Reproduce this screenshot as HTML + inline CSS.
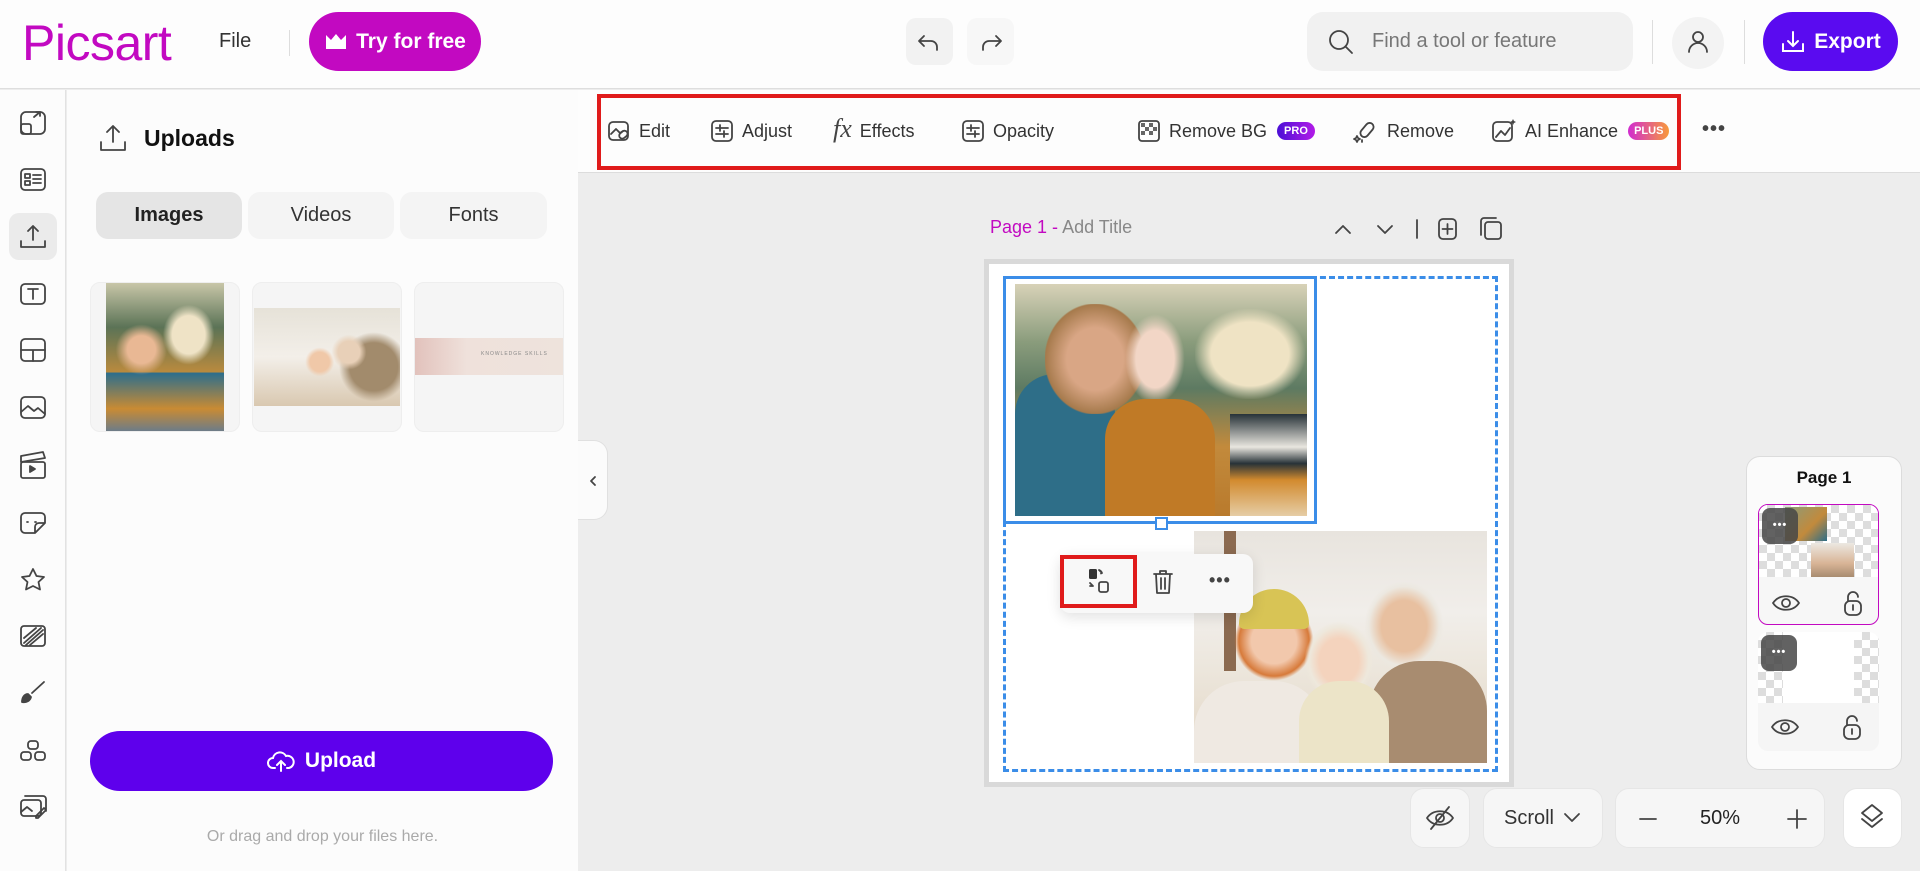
<!DOCTYPE html>
<html><head><meta charset="utf-8"><style>
*{box-sizing:border-box;margin:0;padding:0}
body{width:1920px;height:871px;overflow:hidden;background:#ededed;font-family:"Liberation Sans",sans-serif;position:relative;color:#222}
.a{position:absolute}
svg{display:block}
.ic{fill:none;stroke:#444;stroke-width:1.8;stroke-linecap:round;stroke-linejoin:round}
.tb{position:absolute;top:117px;font-size:18px;color:#333;display:flex;align-items:center;gap:8px;height:28px}
.chk{background-color:#fff;background-image:linear-gradient(45deg,#ddd 25%,transparent 25%,transparent 75%,#ddd 75%),linear-gradient(45deg,#ddd 25%,transparent 25%,transparent 75%,#ddd 75%);background-size:16px 16px;background-position:0 0,8px 8px}
.ctl{position:absolute;top:788px;height:60px;background:#f6f6f6;border-radius:14px;border:1px solid #e6e6e6}
</style></head><body>
<!-- header -->
<div class="a" style="left:0;top:0;width:1920px;height:89px;background:#fdfdfd;border-bottom:1px solid #dedede"></div>
<div class="a" style="left:22px;top:14px;font-size:50px;color:#c209c1;letter-spacing:-0.5px">Picsart</div>
<div class="a" style="left:219px;top:30px;font-size:20px;color:#333">File</div>
<div class="a" style="left:289px;top:30px;width:1px;height:26px;background:#ddd"></div>
<div class="a" style="left:309px;top:12px;width:172px;height:59px;background:#c209c1;border-radius:30px;color:#fff;font-size:21px;font-weight:bold;display:flex;align-items:center;justify-content:center;gap:8px">
<svg width="24" height="20" viewBox="0 0 24 20"><path d="M2 3l5 5 5-6 5 6 5-5v14H2z" fill="#fff"/></svg>Try for free</div>
<div class="a" style="left:906px;top:18px;width:47px;height:47px;background:#f2f2f2;border-radius:10px"><svg width="47" height="47"><path class="ic" d="M18 18l-5 5 5 5M13 23h12a6 6 0 0 1 6 6v3" stroke="#333"/></svg></div>
<div class="a" style="left:967px;top:18px;width:47px;height:47px;background:#f7f7f7;border-radius:10px"><svg width="47" height="47"><path class="ic" d="M29 18l5 5-5 5M34 23H22a6 6 0 0 0-6 6v3" stroke="#bbb"/></svg></div>
<div class="a" style="left:1307px;top:12px;width:326px;height:59px;background:#f1f1f1;border-radius:16px"><svg class="a" style="left:20px;top:16px" width="28" height="28"><circle cx="12" cy="12" r="9" class="ic" stroke="#333" stroke-width="2"/><path d="M19 19l6 6" class="ic" stroke="#333" stroke-width="2"/></svg><div class="a" style="left:65px;top:18px;font-size:20px;color:#777">Find a tool or feature</div></div>
<div class="a" style="left:1652px;top:20px;width:1px;height:44px;background:#ddd"></div>
<div class="a" style="left:1672px;top:17px;width:52px;height:52px;background:#f3f3f3;border-radius:50%"><svg width="52" height="52"><circle cx="26" cy="20" r="5" class="ic" stroke="#333"/><path d="M17 35a9 9 0 0 1 18 0" class="ic" stroke="#333"/></svg></div>
<div class="a" style="left:1744px;top:20px;width:1px;height:44px;background:#ddd"></div>
<div class="a" style="left:1763px;top:12px;width:135px;height:59px;background:#5a0bf0;border-radius:30px;color:#fff;font-size:21px;font-weight:bold;display:flex;align-items:center;justify-content:center;gap:8px"><svg width="26" height="26"><path d="M13 3v14M8 12l5 5 5-5M3 15v7h20v-7" fill="none" stroke="#fff" stroke-width="2" stroke-linecap="round"/></svg>Export</div>

<!-- left rail -->
<div class="a" style="left:0;top:90px;width:66px;height:781px;background:#fcfcfc;border-right:1px solid #e2e2e2"></div>
<div class="a" style="left:9px;top:213px;width:48px;height:47px;background:#ebebeb;border-radius:10px"></div>
<svg class="a" style="left:0;top:90px" width="66" height="781">
<g class="ic" stroke="#444">
<rect x="21" y="22" width="24" height="22" rx="5"/><rect x="21" y="34" width="10" height="10" rx="2"/><path d="M34 27l6-5M36 22h4v4"/>
<rect x="21" y="79" width="24" height="21" rx="4"/><rect x="25" y="84" width="5" height="4"/><rect x="25" y="91" width="5" height="4"/><path d="M33 85h8M33 89h8M33 93h8"/>
<g transform="translate(0,18)"><path d="M33 132v-14M28 123l5-5 5 5M21 133v6h24v-6"/></g>
<rect x="21" y="194" width="24" height="20" rx="4"/><path d="M28 199h10M33 199v10"/>
<rect x="21" y="249" width="24" height="22" rx="4"/><path d="M21 260h24M33 260v11"/>
<rect x="21" y="307" width="24" height="21" rx="4"/><path d="M21 322l7-6 6 5 4-3 7 6"/>
<g transform="translate(0,4)"><rect x="21" y="368" width="24" height="16" rx="2"/><path d="M21 362l22-4 2 6-24 4z"/><path d="M30 372l5 3-5 3z" fill="#444"/></g>
<g transform="translate(0,12)"><path d="M21 428v-13a4 4 0 0 1 4-4h16a4 4 0 0 1 4 4v6l-10 10h-10a4 4 0 0 1-4-4zM35 431v-6a4 4 0 0 1 4-4h6M27 420h1M35 420h1"/></g>
<g transform="translate(0,11)"><path d="M33 468l3.5 7 7.5 1-5.5 5 1.5 7.5-7-3.5-7 3.5 1.5-7.5-5.5-5 7.5-1z"/></g>
<rect x="21" y="536" width="24" height="20" rx="3"/><path d="M24 553l17-15M26 555l17-15M24 548l12-10M30 555l13-11"/>
<g transform="translate(0,8)"><path d="M44 584l-12 11M22 604c4 1 8-1 9-5l-3-3c-4 0-6 4-6 8z" fill="#444"/></g>
<g transform="translate(0,11)"><rect x="28" y="640" width="10" height="8" rx="3"/><rect x="21" y="651" width="10" height="8" rx="3"/><rect x="35" y="651" width="10" height="8" rx="3"/></g>
<g transform="translate(0,8)"><rect x="21" y="702" width="20" height="16" rx="3"/><path d="M25 698h18a3 3 0 0 1 3 3v12M21 714l6-5 5 4M36 718l8-8 2 2-8 8h-2z"/></g>
</g></svg>

<!-- panel -->
<div class="a" style="left:67px;top:90px;width:511px;height:781px;background:#fcfcfc"></div>
<svg class="a" style="left:98px;top:122px" width="30" height="32"><path class="ic" stroke="#333" d="M15 20V4M9 10l6-6 6 6M3 20v8h24v-8"/></svg>
<div class="a" style="left:144px;top:125px;font-size:23px;font-weight:bold;color:#111">Uploads</div>
<div class="a" style="left:96px;top:192px;width:146px;height:47px;background:#e5e5e5;border-radius:12px;font-size:20px;font-weight:bold;color:#222;display:flex;align-items:center;justify-content:center">Images</div>
<div class="a" style="left:248px;top:192px;width:146px;height:47px;background:#f4f4f4;border-radius:12px;font-size:20px;color:#333;display:flex;align-items:center;justify-content:center">Videos</div>
<div class="a" style="left:400px;top:192px;width:147px;height:47px;background:#f4f4f4;border-radius:12px;font-size:20px;color:#333;display:flex;align-items:center;justify-content:center">Fonts</div>
<div class="a" style="left:90px;top:282px;width:150px;height:150px;background:#f5f5f5;border-radius:10px;border:1px solid #eee"></div>
<div class="a" style="left:106px;top:283px;width:118px;height:148px;background:radial-gradient(ellipse at 30% 45%,#e9b894 0 12%,transparent 22%),radial-gradient(ellipse at 70% 35%,#efe3c6 0 14%,transparent 22%),linear-gradient(180deg,#c8c6a8 0,#5b7356 30%,#b98a3e 60%,#2d6e8c 61%,#c98b33 85%,#6d7c88 100%)"></div>
<div class="a" style="left:252px;top:282px;width:150px;height:150px;background:#f5f5f5;border-radius:10px;border:1px solid #eee"></div>
<div class="a" style="left:254px;top:308px;width:146px;height:98px;background:radial-gradient(circle at 45% 55%,#f0c8a8 0 10%,transparent 15%),radial-gradient(circle at 65% 45%,#e8d0b8 0 10%,transparent 16%),radial-gradient(circle at 82% 60%,#a28b6c 0 18%,transparent 26%),linear-gradient(180deg,#e6e2d8,#f3efe9 50%,#d9c8b0)"></div>
<div class="a" style="left:414px;top:282px;width:150px;height:150px;background:#f5f5f5;border-radius:10px;border:1px solid #eee"></div>
<div class="a" style="left:415px;top:338px;width:148px;height:37px;background:linear-gradient(90deg,#e2c2bc,#efe1db 35%,#eee3dc)"><div style="position:absolute;left:66px;top:13px;font-size:5px;letter-spacing:1px;color:#888">KNOWLEDGE SKILLS</div></div>
<div class="a" style="left:90px;top:731px;width:463px;height:60px;background:#5e00ec;border-radius:30px;color:#fff;font-size:21px;font-weight:bold;display:flex;align-items:center;justify-content:center;gap:10px"><svg width="28" height="24"><path d="M8 19H6a5 5 0 0 1 0-10 7 7 0 0 1 13-2 5 5 0 0 1 3 12h-2M14 22V12M10 16l4-4 4 4" fill="none" stroke="#fff" stroke-width="2" stroke-linecap="round"/></svg>Upload</div>
<div class="a" style="left:67px;top:828px;width:511px;text-align:center;font-size:16px;color:#aaa">Or drag and drop your files here.</div>
<div class="a" style="left:578px;top:440px;width:30px;height:80px;background:#fbfbfb;border:1px solid #e0e0e0;border-left:none;border-radius:0 14px 14px 0"><svg width="30" height="80"><path d="M17 36l-4 4 4 4" class="ic" stroke="#222" stroke-width="2"/></svg></div>

<!-- toolbar -->
<div class="a" style="left:578px;top:90px;width:1342px;height:83px;background:#fdfdfd;border-bottom:1px solid #dcdcdc"></div>
<div class="a" style="left:597px;top:94px;width:1084px;height:76px;border:4px solid #e01b1b"></div>
<div class="tb" style="left:607px"><svg width="24" height="24"><rect x="2" y="3" width="19" height="18" rx="4" class="ic"/><path d="M4 15l5-5 4 4 3-2" class="ic"/><rect x="12" y="13" width="9" height="6" rx="3" transform="rotate(-40 16 16)" class="ic"/></svg>Edit</div>
<div class="tb" style="left:710px"><svg width="24" height="24"><rect x="2" y="2" width="20" height="20" rx="4" class="ic"/><path d="M6 9h12M10 6v6M6 15h12M14 12v6" class="ic"/></svg>Adjust</div>
<div class="tb" style="left:833px"><span style="font-family:'Liberation Serif',serif;font-style:italic;font-size:26px;color:#444;margin-top:-4px">fx</span>Effects</div>
<div class="tb" style="left:961px"><svg width="24" height="24"><rect x="2" y="2" width="20" height="20" rx="4" class="ic"/><path d="M6 9h12M10 6v6M6 15h12M14 12v6" class="ic"/></svg>Opacity</div>
<div class="tb" style="left:1137px"><svg width="24" height="24"><rect x="2" y="2" width="20" height="20" rx="3" class="ic"/><path d="M4 4h4v4H4zM12 4h4v4h-4zM8 8h4v4H8zM16 8h4v4h-4zM4 12h4v4H4zM12 12h4v4h-4z" fill="#666"/></svg>Remove BG<span style="background:linear-gradient(90deg,#4b0fd6,#b21be8);color:#fff;font-size:11px;font-weight:bold;padding:3px 7px;border-radius:9px;margin-left:2px">PRO</span></div>
<div class="tb" style="left:1353px"><svg width="26" height="26"><rect x="10" y="4" width="8" height="16" rx="4" transform="rotate(40 14 12)" class="ic"/><path d="M4 18l1 2 2 1-2 1-1 2-1-2-2-1 2-1zM9 22v2" class="ic" stroke-width="1.3"/></svg>Remove</div>
<div class="tb" style="left:1491px"><svg width="26" height="26"><rect x="2" y="4" width="19" height="19" rx="4" class="ic"/><path d="M5 19l5-6 4 4 5-7" class="ic"/><path d="M22 1l1 2 2 1-2 1-1 2-1-2-2-1 2-1z" fill="#444"/></svg>AI Enhance<span style="background:linear-gradient(90deg,#d12bd0,#f89a3b);color:#fff;font-size:11px;font-weight:bold;padding:3px 6px;border-radius:9px;margin-left:2px">PLUS</span></div>
<div class="a" style="left:1702px;top:118px;font-size:20px;color:#444;letter-spacing:1px;font-weight:bold">•••</div>

<!-- canvas header -->
<div class="a" style="left:990px;top:217px;font-size:18px;color:#888"><span style="color:#c209c1">Page 1 - </span>Add Title</div>
<svg class="a" style="left:1330px;top:214px" width="180" height="30"><g class="ic" stroke="#aaa"><path d="M6 19l7-7 7 7M48 12l7 7 7-7"/></g><path d="M87 6v18" class="ic" stroke="#555"/><rect x="109" y="5" width="17" height="20" rx="4" class="ic" stroke="#444"/><path d="M117.5 10v10M112.5 15h10" class="ic" stroke="#444"/><rect x="155" y="8" width="16" height="17" rx="3" class="ic" stroke="#444"/><path d="M151 21V7a3 3 0 0 1 3-3h12" class="ic" stroke="#444"/></svg>

<!-- page -->
<div class="a" style="left:984px;top:259px;width:530px;height:528px;background:#fff;border:5px solid #d9d9d9"></div>
<div class="a" style="left:1003px;top:276px;width:495px;height:496px;border:3px dashed #3b8de8"></div>
<div class="a" style="left:1015px;top:284px;width:292px;height:232px;overflow:hidden;background:linear-gradient(180deg,#d8d2b8 0,#8a9c7c 25%,#5d7a62 45%,#c28a3c 70%,#b97a2c 100%)">
<div class="a" style="left:0;top:90px;width:100px;height:150px;background:#2e6e88;border-radius:40px 40px 0 0"></div>
<div class="a" style="left:30px;top:20px;width:100px;height:110px;background:radial-gradient(ellipse,#d9a685 40%,#a67a4c 70%,transparent 72%)"></div>
<div class="a" style="left:110px;top:30px;width:60px;height:90px;background:radial-gradient(ellipse,#f2d6c6 45%,transparent 70%)"></div>
<div class="a" style="left:90px;top:115px;width:110px;height:130px;background:#c07a26;border-radius:40px 40px 0 0"></div>
<div class="a" style="left:180px;top:25px;width:110px;height:90px;background:radial-gradient(ellipse,#efe3c4 50%,transparent 72%)"></div>
<div class="a" style="left:215px;top:130px;width:80px;height:110px;background:linear-gradient(180deg,#273238 0,#e9e6df 30%,#273238 45%,#d28a2e 60%,#eadcc0 100%)"></div>
</div>
<div class="a" style="left:1003px;top:276px;width:314px;height:248px;border:3px solid #3b8de8"></div>
<div class="a" style="left:1155px;top:517px;width:13px;height:13px;background:#fff;border:2px solid #3b8de8"></div>
<div class="a" style="left:1194px;top:531px;width:293px;height:232px;overflow:hidden;background:linear-gradient(180deg,#e8e4de 0,#f1eeea 35%,#ece6dc 60%,#e3d6c4 100%)">
<div class="a" style="left:30px;top:0;width:12px;height:140px;background:#8b6a50"></div>
<div class="a" style="left:40px;top:70px;width:80px;height:80px;background:radial-gradient(ellipse,#f2c8ac 40%,#d77a3a 62%,transparent 70%)"></div>
<div class="a" style="left:45px;top:58px;width:70px;height:40px;background:#d8c455;border-radius:35px 35px 5px 5px"></div>
<div class="a" style="left:110px;top:90px;width:70px;height:80px;background:radial-gradient(ellipse,#f4d3bd 40%,#eee8dc 60%,transparent 70%)"></div>
<div class="a" style="left:170px;top:50px;width:80px;height:90px;background:radial-gradient(ellipse,#e8c0a0 40%,#ece8e0 62%,transparent 70%)"></div>
<div class="a" style="left:175px;top:130px;width:118px;height:110px;background:#a88c70;border-radius:50px 50px 0 0"></div>
<div class="a" style="left:0;top:150px;width:130px;height:90px;background:#efe9e2;border-radius:50px 50px 0 0"></div>
<div class="a" style="left:105px;top:150px;width:90px;height:90px;background:#ece4c8;border-radius:40px 40px 0 0"></div>
</div>
<!-- floating toolbar -->
<div class="a" style="left:1060px;top:554px;width:193px;height:59px;background:#f8f8f8;border-radius:10px;box-shadow:0 4px 14px rgba(0,0,0,.12)"></div>
<div class="a" style="left:1060px;top:555px;width:77px;height:53px;border:4px solid #e01b1b"></div>
<svg class="a" style="left:1085px;top:566px" width="30" height="30"><rect x="4" y="3" width="8" height="10" rx="1.5" fill="#333"/><rect x="14" y="16" width="9" height="10" rx="2" class="ic" stroke="#333"/><path d="M14 4l3 3-1 .5M17 7a5 5 0 0 0-3-3M5 17l3 3M8 20l-3 0" class="ic" stroke="#333" stroke-width="1.5"/></svg>
<svg class="a" style="left:1150px;top:568px" width="26" height="28"><path d="M4 6h18M10 6V3h6v3M6 6l1 19h12l1-19M11 10v11M15 10v11" class="ic" stroke="#444"/></svg>
<div class="a" style="left:1209px;top:570px;font-size:18px;color:#444;font-weight:bold;letter-spacing:1px">•••</div>

<!-- pages panel -->
<div class="a" style="left:1746px;top:456px;width:156px;height:314px;background:#fbfbfb;border:1px solid #dcdcdc;border-radius:14px"></div>
<div class="a" style="left:1746px;top:468px;width:156px;text-align:center;font-size:17px;font-weight:bold;color:#111">Page 1</div>
<div class="a" style="left:1758px;top:504px;width:121px;height:121px;border:1px solid #c209c1;border-radius:10px;background:#f7f7f7;overflow:hidden">
<div class="chk" style="position:absolute;left:0;top:0;width:121px;height:72px"></div>
<div class="a" style="left:26px;top:2px;width:42px;height:34px;background:linear-gradient(135deg,#8a9c7c,#c28a3c 60%,#2e6e88)"></div>
<div class="a" style="left:52px;top:38px;width:43px;height:34px;background:linear-gradient(180deg,#ece8e2,#d8b496 60%,#a88c70)"></div>
<div class="a" style="left:3px;top:3px;width:36px;height:36px;background:rgba(70,70,70,.85);border-radius:8px;color:#fff;font-size:11px;font-weight:bold;text-align:center;line-height:34px;letter-spacing:1px">•••</div>
<svg class="a" style="left:12px;top:83px" width="100" height="30"><path d="M2 15c6-9 20-9 26 0-6 9-20 9-26 0z" class="ic" stroke="#444"/><circle cx="15" cy="15" r="4" class="ic" stroke="#444"/><rect x="74" y="13" width="16" height="14" rx="5" class="ic" stroke="#444"/><path d="M77 13v-4a5 5 0 0 1 10 0M82 17v5" class="ic" stroke="#444"/></svg>
</div>
<div class="a" style="left:1758px;top:632px;width:121px;height:119px;border-radius:10px;background:#f5f5f5;overflow:hidden">
<div class="chk" style="position:absolute;left:0;top:0;width:121px;height:71px"></div>
<div class="a" style="left:25px;top:0;width:71px;height:71px;background:#fff"></div>
<div class="a" style="left:3px;top:3px;width:36px;height:36px;background:rgba(70,70,70,.85);border-radius:8px;color:#fff;font-size:11px;font-weight:bold;text-align:center;line-height:34px;letter-spacing:1px">•••</div>
<svg class="a" style="left:12px;top:80px" width="100" height="30"><path d="M2 15c6-9 20-9 26 0-6 9-20 9-26 0z" class="ic" stroke="#444"/><circle cx="15" cy="15" r="4" class="ic" stroke="#444"/><rect x="74" y="13" width="16" height="14" rx="5" class="ic" stroke="#444"/><path d="M77 13v-4a5 5 0 0 1 10 0M82 17v5" class="ic" stroke="#444"/></svg>
</div>

<!-- bottom controls -->
<div class="ctl" style="left:1410px;width:60px"><svg width="58" height="58"><path d="M16 29c6-9 20-9 26 0-6 9-20 9-26 0z" class="ic" stroke="#444"/><circle cx="29" cy="29" r="4" class="ic" stroke="#444"/><path d="M20 40l18-22" class="ic" stroke="#444"/></svg></div>
<div class="ctl" style="left:1483px;width:120px;font-size:20px;color:#333;display:flex;align-items:center;justify-content:center;gap:8px">Scroll<svg width="20" height="14"><path d="M3 3l7 7 7-7" class="ic" stroke="#333"/></svg></div>
<div class="ctl" style="left:1615px;width:210px"><svg class="a" style="left:22px;top:20px" width="20" height="20"><path d="M2 10h16" class="ic" stroke="#333"/></svg><div class="a" style="left:0;width:208px;top:18px;text-align:center;font-size:20px;color:#222">50%</div><svg class="a" style="left:170px;top:19px" width="22" height="22"><path d="M2 11h18M11 2v18" class="ic" stroke="#333"/></svg></div>
<div class="ctl" style="left:1843px;width:59px;background:#fff"><svg width="57" height="58"><path d="M28 16l10 8-10 8-10-8z M18 30l10 8 10-8" class="ic" stroke="#444"/></svg></div>
</body></html>
